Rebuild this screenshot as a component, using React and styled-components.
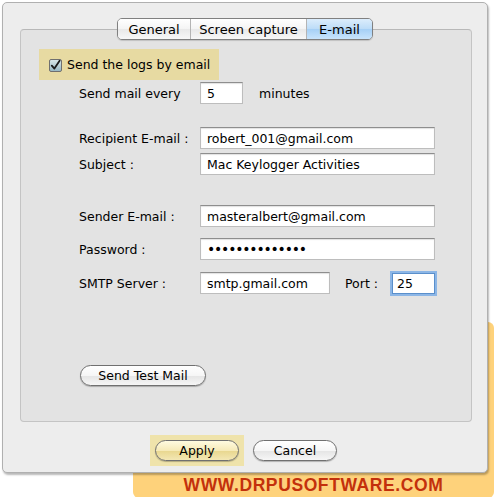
import React from "react";
import styled, { createGlobalStyle } from "styled-components";

const Global = createGlobalStyle`
  html, body { margin: 0; padding: 0; background: #ffffff; }
  body { font-family: "DejaVu Sans", "Liberation Sans", sans-serif; font-size: 12px; color: #000; }
`;

const Page = styled.div`
  width: 495px;
  height: 497px;
  overflow: hidden;
  padding-top: 2px;
  box-sizing: border-box;
`;

const Window = styled.div`
  position: relative;
  z-index: 1;
  margin-left: 2px;
  width: 486px;
  height: 471px;
  box-sizing: border-box;
  background: #ededed;
  border: 1px solid #b0b0b0;
  border-radius: 5px;
  box-shadow: 1px 2px 2px rgba(0, 0, 0, 0.28);
  padding: 15px 15px 0 17px;
  display: flex;
  flex-direction: column;
`;

const TabBar = styled.div`
  position: relative;
  z-index: 2;
  align-self: center;
  display: flex;
  height: 22px;
  box-sizing: border-box;
  border: 1px solid #808080;
  border-radius: 5px;
  overflow: hidden;
  margin-left: -2px;
  box-shadow: 0 1px 1px rgba(0, 0, 0, 0.15);
`;

const Tab = styled.div`
  width: ${(p) => p.$w}px;
  box-sizing: border-box;
  display: flex;
  align-items: center;
  justify-content: center;
  font-size: 13px;
  border-left: ${(p) => (p.$first ? "none" : "1px solid #b4b4b4")};
  background: ${(p) =>
    p.$active
      ? "linear-gradient(#dcedfc 0%, #bcdcf8 50%, #a6d0f6 52%, #c8e4fc 100%)"
      : "linear-gradient(#ffffff 0%, #f4f4f4 50%, #e9e9e9 52%, #f7f7f7 100%)"};
`;

const GroupBox = styled.div`
  margin-top: -11px;
  width: 452px;
  height: 393px;
  box-sizing: border-box;
  background: #e3e3e3;
  border: 1px solid #c4c4c4;
  border-top-color: #b8b8b8;
  border-radius: 4px;
  padding: 19px 0 0 18px;
  display: flex;
  flex-direction: column;
`;

const Highlight = styled.div`
  background: #e7daa2;
  display: flex;
  align-items: center;
  box-sizing: border-box;
`;

const CheckHighlight = styled(Highlight)`
  width: 180px;
  height: 31px;
  padding-left: 10px;
  gap: 5px;
  font-size: 12.5px;
`;

const CheckBox = styled.span`
  width: 13px;
  height: 13px;
  box-sizing: border-box;
  border: 1px solid #6f6f6f;
  border-radius: 2px;
  background: linear-gradient(#d7e6e8, #98b8c4);
  display: flex;
  align-items: center;
  justify-content: center;
  margin-top: 1px;
`;

const Row = styled.div`
  display: flex;
  align-items: center;
  margin-top: ${(p) => p.$mt || 0}px;
  padding-left: 40px;
`;

const Label = styled.span`
  width: 121px;
  flex: none;
  font-size: 12.5px;
  white-space: nowrap;
`;

const Field = styled.div`
  width: ${(p) => p.$w}px;
  height: 22px;
  box-sizing: border-box;
  background: #fff;
  border: 1px solid #bdbdbd;
  border-top-color: #8e8e8e;
  box-shadow: inset 0 1px 1px rgba(0, 0, 0, 0.12);
  padding-left: 6px;
  display: flex;
  align-items: center;
  font-size: ${(p) => (p.$dots ? "14px" : "12.5px")};
  white-space: nowrap;
  overflow: hidden;
  letter-spacing: ${(p) => (p.$dots ? "-1.2px" : "0")};
`;

const FocusField = styled(Field)`
  height: 21px;
  border: 1px solid #5a8fcb;
  box-shadow: 0 0 0 2px #8cb6e6;
  padding-left: 4px;
`;

const Suffix = styled.span`
  font-size: 12.5px;
  margin-left: ${(p) => p.$ml}px;
  margin-right: ${(p) => p.$mr || 0}px;
`;

const PillButton = styled.div`
  width: ${(p) => p.$w}px;
  height: 21px;
  box-sizing: border-box;
  border: 1px solid #707070;
  border-radius: 11px;
  display: flex;
  align-items: center;
  justify-content: center;
  font-size: 12.5px;
  box-shadow: 0 1px 1px rgba(0, 0, 0, 0.25);
  background: ${(p) =>
    p.$yellow
      ? "linear-gradient(#fffbe0 0%, #f6eab8 50%, #e9d891 55%, #f3e7b4 100%)"
      : "linear-gradient(#ffffff 0%, #f6f6f6 50%, #e6e6e6 55%, #f6f6f6 100%)"};
`;

const TestRow = styled.div`
  margin-top: 71px;
  padding-left: 41px;
`;

const Footer = styled.div`
  display: flex;
  align-items: center;
  margin-top: 13px;
  padding-left: 130px;
  gap: 9px;
`;

const ApplyHighlight = styled(Highlight)`
  width: 94px;
  height: 31px;
  justify-content: center;
  background: #efe3ab;
`;

const Banner = styled.div`
  margin-top: -151px;
  margin-left: 133px;
  width: 361px;
  height: 176px;
  box-sizing: border-box;
  background: #fed27b;
  border-radius: 6px;
  display: flex;
  align-items: flex-end;
  justify-content: center;
  padding-bottom: 2px;
  font-family: "Liberation Sans", Arial, sans-serif;
  font-weight: bold;
  font-size: 17.5px;
  letter-spacing: 0.6px;
  color: #c3300c;
`;

export default function App() {
  return (
    <>
      <Global />
      <Page>
        <Window>
          <TabBar>
            <Tab $w={72} $first>General</Tab>
            <Tab $w={116}>Screen capture</Tab>
            <Tab $w={66} $active>E-mail</Tab>
          </TabBar>
          <GroupBox>
            <CheckHighlight>
              <CheckBox>
                <svg width="11" height="11" viewBox="0 0 11 11">
                  <path d="M1.8 5.6 L4.4 8.6 L9.6 0.8" fill="none" stroke="#1b1b1b" strokeWidth="1.8" strokeLinecap="round" strokeLinejoin="round" />
                </svg>
              </CheckBox>
              Send the logs by email
            </CheckHighlight>
            <Row $mt={2}>
              <Label>Send mail every</Label>
              <Field $w={43}>5</Field>
              <Suffix $ml={16}>minutes</Suffix>
            </Row>
            <Row $mt={23}>
              <Label>Recipient E-mail :</Label>
              <Field $w={235}>robert_001@gmail.com</Field>
            </Row>
            <Row $mt={4}>
              <Label>Subject :</Label>
              <Field $w={235}>Mac Keylogger Activities</Field>
            </Row>
            <Row $mt={30}>
              <Label>Sender E-mail :</Label>
              <Field $w={235}>masteralbert@gmail.com</Field>
            </Row>
            <Row $mt={11}>
              <Label>Password :</Label>
              <Field $w={235} $dots>••••••••••••••</Field>
            </Row>
            <Row $mt={12}>
              <Label>SMTP Server :</Label>
              <Field $w={130}>smtp.gmail.com</Field>
              <Suffix $ml={15} $mr={14}>Port :</Suffix>
              <FocusField $w={43}>25</FocusField>
            </Row>
            <TestRow>
              <PillButton $w={126}>Send Test Mail</PillButton>
            </TestRow>
          </GroupBox>
          <Footer>
            <ApplyHighlight>
              <PillButton $w={84} $yellow>Apply</PillButton>
            </ApplyHighlight>
            <PillButton $w={84}>Cancel</PillButton>
          </Footer>
        </Window>
        <Banner>WWW.DRPUSOFTWARE.COM</Banner>
      </Page>
    </>
  );
}
